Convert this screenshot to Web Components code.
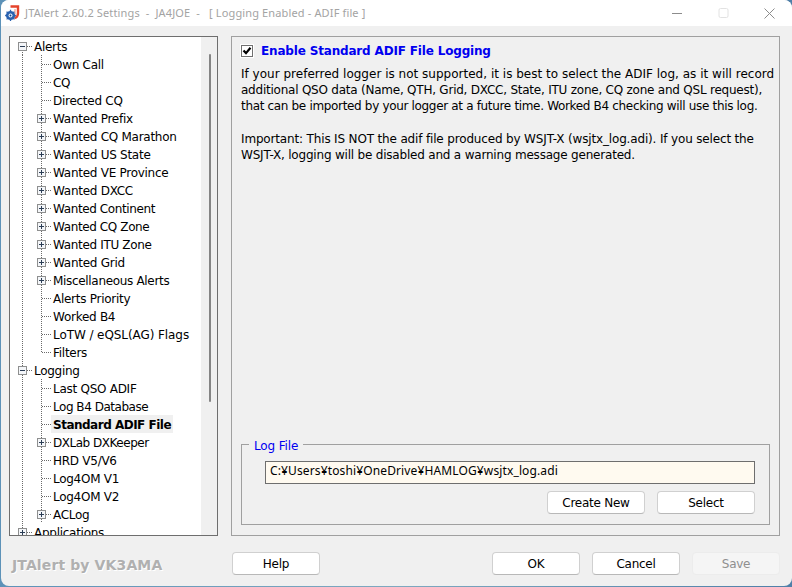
<!DOCTYPE html><html><head><meta charset="utf-8"><style>html,body{margin:0;padding:0;background:#3f6f9f}</style></head><body>
<template id="t-win"><style>
:host{display:flex;flex-direction:column;width:792px;height:587px;box-sizing:border-box;overflow:hidden;font:12px "DejaVu Sans",sans-serif;color:#000;background:linear-gradient(90deg,#5d92b8,#7fa9c0 50%,#4f7fa8)}
.w{flex:1;display:flex;flex-direction:column;margin:0 0 1px 1px;background:#f0f0f0;border-radius:8px}
.c{flex:1;display:flex;flex-direction:column;padding:10px 12px 0 8px}
.m{display:flex;gap:13px;height:500px}
.f{display:flex;align-items:center;margin-top:16px;height:23px}
.gap{flex:1}
.r{display:flex;gap:12px}
</style><div class="w"><slot name="title"></slot><div class="c"><div class="m"><slot name="tree"></slot><slot name="panel"></slot></div><div class="f"><slot name="mark"></slot><slot name="help"></slot><span class="gap"></span><div class="r"><slot name="act"></slot></div></div></div></div></template>

<template id="t-title"><style>
:host{display:flex;align-items:center;height:26px;background:#fff;border-radius:8px 8px 0 0;padding-left:4px;color:#a3a3a3;font:11px "Noto Sans",sans-serif;letter-spacing:.14px;white-space:pre}
svg{flex:none}
.t{margin-left:4px;flex:1;padding-bottom:1px}
.b{display:flex;align-items:center;gap:0}
.b span{width:46px;display:flex;justify-content:center}
</style><svg width="16" height="16" viewBox="0 0 16 16"><path d="M5.5 1.5H13V8c0 2.6-1 4.6-3.6 5" fill="none" stroke="#e5432b" stroke-width="2.4"/><path d="M10 4v5" stroke="#f08a70" stroke-width="1"/><circle cx="5.5" cy="10.5" r="4.6" fill="#2a62b0"/><path d="M5.5 4.8v11.4M.1 10.5h10.8M1.6 6.6l7.8 7.8M9.4 6.6l-7.8 7.8" stroke="#2a62b0" stroke-width="1.3"/><circle cx="5.5" cy="10.5" r="2" fill="#e6eef8"/><circle cx="5.5" cy="10.5" r=".9" fill="#123f85"/></svg><span class="t"><slot></slot></span><div class="b"><span><svg width="11" height="11"><rect x="0" y="5" width="10" height="1" fill="#8c8c8c"/></svg></span><span><svg width="11" height="11"><rect x="1" y=".5" width="9" height="9" rx="1.5" fill="none" stroke="#e2e2e2"/></svg></span><span><svg width="11" height="11"><path d="M.5 .5l10 10M10.5 .5l-10 10" stroke="#8c8c8c" fill="none"/></svg></span></div></template>

<template id="t-tree"><style>
:host{display:flex;flex:none;width:209px;height:500px;box-sizing:border-box;border:1px solid #6e6e6e;background:#fff;overflow:hidden}
.l{flex:1;min-width:0;overflow:hidden;padding-top:0;height:498px}
.s{width:16px;flex:none;background:#f0f0f0;display:flex;justify-content:center;padding-top:17px;padding-left:1px;box-sizing:border-box}
.s i{display:block;width:2px;height:348px;background:#858585;border-radius:1px}
</style><div class="l"><slot></slot></div><div class="s"><i></i></div></template>

<template id="t-row"><style>
:host{display:flex;height:18px;padding-left:3px;align-items:center;white-space:nowrap;letter-spacing:-.27px;color:#000}
svg{flex:none;display:block}
.x{margin-left:2px;line-height:18px;position:relative;top:1px}
:host([sel]) .x{background:#f0f0f0;font-weight:bold;margin-left:0;padding:0 2px;letter-spacing:-.5px;top:0;height:18px;line-height:20px;overflow:hidden}
</style><span id="g" style="display:flex"></span><span class="x"><slot></slot></span></template>

<template id="t-panel"><style>
:host{display:flex;flex:none;flex-direction:column;width:549px;height:500px;box-sizing:border-box;border:1px solid #a0a0a0;background:#f0f0f0;padding:7px 9px 10px 9px}
.h{display:flex;align-items:center;gap:8px;height:13px}
.c{display:block;width:12px;height:12px;box-sizing:border-box;background:#fff;border:1px solid #707070;outline:1px solid #fff;flex:none}
.tl{color:#0000f0;font-weight:bold;font-size:12px;letter-spacing:-.17px}
.b{margin-top:9px;line-height:16.2px;white-space:pre;flex:1;min-width:0}
</style><div class="h"><span class="c"><svg width="10" height="10" viewBox="0 0 10 10" style="display:block"><path d="M1.5 4.5l2.5 2.6L8.5 1.8" fill="none" stroke="#000" stroke-width="2.2"/></svg></span><span class="tl"><slot name="head"></slot></span></div><div class="b"><slot></slot></div><slot name="group"></slot></template>

<template id="t-group"><style>
:host{display:block;position:relative;height:81px;box-sizing:border-box;border:1px solid #a0a0a0;padding:16px 14px 0 23px}
.lg{position:absolute;left:7px;top:-6px;background:#f0f0f0;padding:0 5px;color:#0000f0;letter-spacing:-.15px;line-height:15px}
.i{display:block;height:23px;line-height:21px;box-sizing:border-box;border:1px solid #6e6e6e;background:#fffaf0;padding-left:4px;font:12px "Noto Sans","Noto Sans CJK JP",sans-serif;letter-spacing:.13px;white-space:nowrap}
.r{display:flex;justify-content:flex-end;gap:12px;margin-top:7px}
</style><span class="lg"><slot name="legend"></slot></span><span class="i"><slot name="path"></slot></span><div class="r"><slot></slot></div></template>

<template id="t-btn"><style>
:host{display:flex;width:88px;height:23px;box-sizing:border-box;align-items:center;justify-content:center;background:#fff;border:1px solid #d0d0d0;border-bottom-color:#b8b8b8;border-radius:4px;letter-spacing:-.25px;flex:none}
:host([w98]){width:98px;height:23px}
:host([dis]){background:#f5f5f5;border-color:#ececec;color:#8f8f8f}
</style><slot></slot></template>

<template id="t-mark"><style>
:host{display:block;width:223px;color:#b0b0b0;font:bold 14px "DejaVu Sans",sans-serif;letter-spacing:.12px;text-shadow:1px 1px 0 #fff;padding:3px 0 0 3px;white-space:nowrap;box-sizing:border-box;flex:none}
</style><slot></slot></template>

<app-window>
<title-bar slot="title">JTAlert 2.60.2 Settings  -  JA4JOE  -   [ Logging Enabled - ADIF file ]</title-bar>
<tree-box slot="tree" id="tree"></tree-box>
<opt-panel slot="panel"><span slot="head">Enable Standard ADIF File Logging</span><span style="letter-spacing:.01px">If your preferred logger is not supported, it is best to select the ADIF log, as it will record</span>
<span style="letter-spacing:-.23px">additional QSO data (Name, QTH, Grid, DXCC, State, ITU zone, CQ zone and QSL request),</span>
<span style="letter-spacing:-.33px">that can be imported by your logger at a future time. Worked B4 checking will use this log.</span>

<span style="letter-spacing:-.16px">Important: This IS NOT the adif file produced by WSJT-X (wsjtx_log.adi). If you select the</span>
<span style="letter-spacing:-.2px">WSJT-X, logging will be disabled and a warning message generated.</span><log-group slot="group"><span slot="legend">Log File</span><span slot="path">C:¥Users¥toshi¥OneDrive¥HAMLOG¥wsjtx_log.adi</span><ui-btn w98>Create New</ui-btn><ui-btn w98>Select</ui-btn></log-group></opt-panel>
<foot-mark slot="mark">JTAlert by VK3AMA</foot-mark>
<ui-btn slot="help">Help</ui-btn>
<ui-btn slot="act">OK</ui-btn><ui-btn slot="act">Cancel</ui-btn><ui-btn slot="act" dis>Save</ui-btn>
</app-window>
<script>
function def(n,t,extra){customElements.define(n,class extends HTMLElement{constructor(){super();this.attachShadow({mode:'open'}).appendChild(document.getElementById(t).content.cloneNode(true))}connectedCallback(){extra&&extra.call(this)}})}
def('app-window','t-win');def('title-bar','t-title');def('tree-box','t-tree');def('opt-panel','t-panel');def('log-group','t-group');def('ui-btn','t-btn');def('foot-mark','t-mark');
const D='stroke="#6a6a6a" stroke-dasharray="1 1" fill="none" shape-rendering="crispEdges"';
function cell(o){
 let s='<svg width="19" height="18">';
 if(o.v==='full')s+=`<path d="M9.5 0V18" ${D}/>`;
 if(o.v==='top')s+=`<path d="M9.5 0V9" ${D}/>`;
 if(o.v==='bot')s+=`<path d="M9.5 9V18" ${D}/>`;
 if(o.stub)s+=`<path d="M10 9.5H20" ${D}/>`;
 if(o.box){s+='<rect x="5.5" y="5.5" width="8" height="8" fill="#f4f6f9" stroke="#8e8f8f" shape-rendering="crispEdges"/><path d="M7 9.5h5" stroke="#2b3d55" shape-rendering="crispEdges"/>';if(o.box==='+')s+='<path d="M9.5 7v5" stroke="#2b3d55" shape-rendering="crispEdges"/>'}
 return s+'</svg>';
}
def('tree-row','t-row',function(){const g=this.shadowRoot.getElementById('g'),l=+this.getAttribute('lv'),k=this.getAttribute('k'),last=this.hasAttribute('last'),first=this.hasAttribute('first');
 g.innerHTML=l===0?cell({v:first?'bot':'full',stub:1,box:k}):cell({v:'full'})+cell({v:last?'top':'full',stub:1,box:k});});
const rows=[[0,'-','Alerts','first'],[1,'','Own Call'],[1,'','CQ'],[1,'','Directed CQ'],[1,'+','Wanted Prefix'],[1,'+','Wanted CQ Marathon'],[1,'+','Wanted US State'],[1,'+','Wanted VE Province'],[1,'+','Wanted DXCC'],[1,'+','Wanted Continent',,-.39],[1,'+','Wanted CQ Zone',,-.39],[1,'+','Wanted ITU Zone',,-.34],[1,'+','Wanted Grid'],[1,'+','Miscellaneous Alerts',,-.32],[1,'','Alerts Priority'],[1,'','Worked B4'],[1,'','LoTW / eQSL(AG) Flags',,-.08],[1,'','Filters','last'],[0,'-','Logging'],[1,'','Last QSO ADIF'],[1,'','Log B4 Database',,-.47],[1,'','Standard ADIF File','sel'],[1,'+','DXLab DXKeeper',,-.48],[1,'','HRD V5/V6'],[1,'','Log4OM V1'],[1,'','Log4OM V2'],[1,'+','ACLog'],[0,'+','Applications']];
const tr=document.getElementById('tree');
for(const [l,k,t,f,ls] of rows){const r=document.createElement('tree-row');r.setAttribute('lv',l);if(k)r.setAttribute('k',k);if(f)r.setAttribute(f,'');if(ls)r.style.letterSpacing=ls+'px';r.textContent=t;tr.appendChild(r)}
</script></body></html>
